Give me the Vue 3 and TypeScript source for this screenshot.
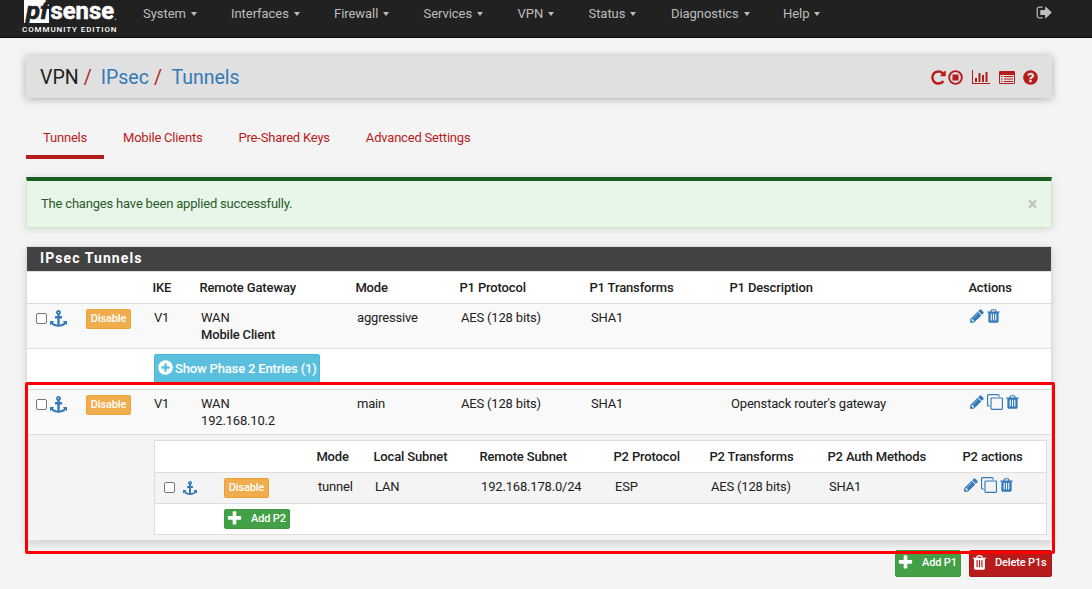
<script setup lang="ts">
import { h, type FunctionalComponent } from 'vue'

const circle =
  'm384 192q0 209-103 385.500t-279.500 279.500-385.500 103-385.500-103-279.500-279.500-103-385.500 103-385.500 279.500-279.500 385.500-103 385.500 103 279.500 279.500 103 385.500z'

const paths: Record<string, string> = {
  pencil:
    'M491 1536l91-91-235-235-91 91v107h128v128h107zm523-928q0-22-22-22-10 0-17 7l-542 542q-7 7-7 17 0 22 22 22 10 0 17-7l542-542q7-7 7-17zm-54-192l416 416-832 832h-416v-416zm683 96q0 53-37 90l-166 166-416-416 166-165q36-38 90-38 53 0 91 38l235 234q37 39 37 91z',
  trash:
    'M704 1376v-704q0-14-9-23t-23-9h-64q-14 0-23 9t-9 23v704q0 14 9 23t23 9h64q14 0 23-9t9-23zm256 0v-704q0-14-9-23t-23-9h-64q-14 0-23 9t-9 23v704q0 14 9 23t23 9h64q14 0 23-9t9-23zm256 0v-704q0-14-9-23t-23-9h-64q-14 0-23 9t-9 23v704q0 14 9 23t23 9h64q14 0 23-9t9-23zm-544-992h448l-48-117q-7-9-17-11h-317q-10 2-17 11zm928 32v64q0 14-9 23t-23 9h-96v948q0 83-47 143.500t-113 60.500h-832q-66 0-113-58.500t-47-141.500v-952h-96q-14 0-23-9t-9-23v-64q0-14 9-23t23-9h309l70-167q15-37 54-63t79-26h320q40 0 79 26t54 63l70 167h309q14 0 23 9t9 23z',
  plus:
    'M1600 736v192q0 40-28 68t-68 28h-416v416q0 40-28 68t-68 28h-192q-40 0-68-28t-28-68v-416h-416q-40 0-68-28t-28-68v-192q0-40 28-68t68-28h416v-416q0-40 28-68t68-28h192q40 0 68 28t28 68v416h416q40 0 68 28t28 68z',
  plusCircle:
    'M1344 960v-128q0-26-19-45t-45-19h-256v-256q0-26-19-45t-45-19h-128q-26 0-45 19t-19 45v256h-256q-26 0-45 19t-19 45v128q0 26 19 45t45 19h256v256q0 26 19 45t45 19h128q26 0 45-19t19-45v-256h256q26 0 45-19t19-45zm320-64q0 209-103 385.500t-279.500 279.500-385.500 103-385.500-103-279.500-279.500-103-385.500 103-385.500 279.500-279.500 385.500-103 385.500 103 279.500 279.500 103 385.500z',
  anchor:
    'M960 256q0-26-19-45t-45-19-45 19-19 45 19 45 45 19 45-19 19-45zm832 928v352q0 22-20 30-8 2-12 2-13 0-23-9l-93-93q-119 143-318.500 226.500t-429.500 83.500-429.500-83.500-318.500-226.500l-93 93q-9 9-23 9-4 0-12-2-20-8-20-30v-352q0-14 9-23t23-9h352q22 0 30 20 8 19-7 35l-100 100q67 91 189.500 153.500t271.500 82.500v-647h-192q-26 0-45-19t-19-45v-128q0-26 19-45t45-19h192v-163q-58-34-93-92.500t-35-128.500q0-106 75-181t181-75 181 75 75 181q0 70-35 128.500t-93 92.500v163h192q26 0 45 19t19 45v128q0 26-19 45t-45 19h-192v647q149-20 271.500-82.500t189.500-153.500l-100-100q-15-16-7-35 8-20 30-20h352q14 0 23 9t9 23z',
  clone:
    'M1664 1632v-1088q0-13-9.500-22.500t-22.500-9.500h-1088q-13 0-22.500 9.500t-9.500 22.500v1088q0 13 9.500 22.500t22.500 9.500h1088q13 0 22.500-9.500t9.500-22.500zm128-1088v1088q0 66-47 113t-113 47h-1088q-66 0-113-47t-47-113v-1088q0-66 47-113t113-47h1088q66 0 113 47t47 113zm-384-384v160h-128v-160q0-13-9.500-22.500t-22.500-9.500h-1088q-13 0-22.500 9.500t-9.500 22.500v1088q0 13 9.500 22.500t22.500 9.500h160v128h-160q-66 0-113-47t-47-113v-1088q0-66 47-113t113-47h1088q66 0 113 47t47 113z',
  repeat:
    'M1664 256v448q0 26-19 45t-45 19h-448q-42 0-59-40-17-39 14-69l138-138q-148-137-349-137-104 0-198.500 40.500t-163.500 109.500-109.500 163.500-40.500 198.500 40.500 198.500 109.500 163.500 163.500 109.500 198.500 40.500q119 0 225-52t179-147q7-10 23-12 15 0 25 9l137 138q9 8 9.500 20.500t-7.500 22.500q-109 132-264 204.500t-327 72.500q-156 0-298-61t-245-164-164-245-61-298 61-298 164-245 245-164 298-61q147 0 284.500 55.500t244.500 156.500l130-129q29-31 70-14 39 17 39 59z',
  question:
    'M1024 1376v-192q0-14-9-23t-23-9h-192q-14 0-23 9t-9 23v192q0 14 9 23t23 9h192q14 0 23-9t9-23zm256-672q0-88-55.500-163t-138.500-116-170-41q-243 0-371 213-15 24 8 42l132 100q7 6 19 6 16 0 25-12 53-68 86-92 34-24 86-24 48 0 85.500 26t37.500 59q0 38-20 61t-68 45q-63 28-115.500 86.500t-52.500 125.500v36q0 14 9 23t23 9h192q14 0 23-9t9-23q0-19 21.500-49.500t54.500-49.500q32-18 49-28.500t46-35 44.500-48 28-60.500 12.500-81z' + circle,
  signOut:
    'M704 1440q0 4 1 20t.5 26.500-3 23.500-10 19.500-20.500 6.500h-320q-119 0-203.500-84.500t-84.500-203.500v-704q0-119 84.500-203.500t203.500-84.500h320q13 0 22.500 9.500t9.500 22.500q0 4 1 20t.5 26.500-3 23.500-10 19.500-20.500 6.500h-320q-66 0-113 47t-47 113v704q0 66 47 113t113 47h312l11.500 1 11.500 3 8 5.500 7 9 2 13.500zm928-544q0 26-19 45l-544 544q-19 19-45 19t-45-19-19-45v-288h-448q-26 0-45-19t-19-45v-384q0-26 19-45t45-19h448v-288q0-26 19-45t45-19 45 19l544 544q19 19 19 45z',
  stop:
    'M576 576h640v640h-640zM896 128a768 768 0 1 0 0 1536a768 768 0 1 0 0-1536zm0 200a568 568 0 1 1 0 1136a568 568 0 1 1 0-1136z'
}

const Icon: FunctionalComponent<{ name: string }> = (props) =>
  h('svg', { viewBox: '0 0 1792 1792', fill: 'currentColor', 'fill-rule': 'evenodd' }, [
    h('path', { d: paths[props.name] })
  ])
Icon.props = ['name']

const menu = ['System', 'Interfaces', 'Firewall', 'Services', 'VPN', 'Status', 'Diagnostics', 'Help']
const tabs = ['Tunnels', 'Mobile Clients', 'Pre-Shared Keys', 'Advanced Settings']
const p1Head = ['', '', 'IKE', 'Remote Gateway', 'Mode', 'P1 Protocol', 'P1 Transforms', 'P1 Description', 'Actions']
const p2Head = ['', '', '', 'Mode', 'Local Subnet', 'Remote Subnet', 'P2 Protocol', 'P2 Transforms', 'P2 Auth Methods', 'P2 actions']

interface Phase1 {
  gateway: string
  mobile: boolean
  mode: string
  description: string
  actions: string[]
}
const phase1: Phase1[] = [
  { gateway: 'Mobile Client', mobile: true, mode: 'aggressive', description: '', actions: ['pencil', 'trash'] },
  { gateway: '192.168.10.2', mobile: false, mode: 'main', description: "Openstack router's gateway", actions: ['pencil', 'clone', 'trash'] }
]
const phase2 = ['tunnel', 'LAN', '192.168.178.0/24', 'ESP', 'AES (128 bits)', 'SHA1']
</script>

<template>
  <div class="page">
    <header class="navbar">
      <svg class="logo" width="98" height="36" viewBox="0 0 98 36">
        <path d="M3 0H24L28 3V23H3Z" fill="#fff" />
        <text class="logo-pf" x="5" y="18.500" textLength="23" lengthAdjust="spacingAndGlyphs">pf</text>
        <text class="logo-sense" x="29.500" y="19" textLength="63.500" lengthAdjust="spacingAndGlyphs">sense</text>
        <circle cx="94.500" cy="19.500" r=".7" fill="#bbb" />
        <text class="logo-ce" x="1" y="32" textLength="94.500">COMMUNITY EDITION</text>
      </svg>
      <nav class="menu">
        <a v-for="item in menu" :key="item">{{ item }}<i class="caret"></i></a>
      </nav>
      <Icon class="logout" name="signOut" />
    </header>

    <div class="titlebar">
      <div class="crumbs">
        <span>VPN</span><em class="s1">/</em><a>IPsec</a><em class="s2">/</em><a>Tunnels</a>
      </div>
      <div class="tools">
        <Icon class="t-repeat" name="repeat" />
        <Icon class="t-stop" name="stop" />
        <svg class="t-chart" viewBox="0 0 18 14" fill="currentColor">
          <path d="M0 0h1v13h17v1H0zM3 8h2v4H3zM6.500 3h2v9h-2zM10 5h2v7h-2zM13.500 2h2v10h-2z" />
        </svg>
        <svg class="t-list" viewBox="0 0 16 13" fill="currentColor">
          <path fill-rule="evenodd" d="M1 0h14q1 0 1 1v11q0 1-1 1H1q-1 0-1-1V1q0-1 1-1zM1 4v8h14V4zM2 5h1.500v1H2zM5 5h9v1H5zM2 7.500h1.500v1H2zM5 7.500h9v1H5zM2 10h1.500v1H2zM5 10h9v1H5z" />
        </svg>
        <Icon class="t-help" name="question" />
      </div>
    </div>

    <ul class="tabs">
      <li v-for="(tab, i) in tabs" :key="tab" :class="{ active: i === 0 }">{{ tab }}</li>
    </ul>

    <div class="alert"><span>The changes have been applied successfully.</span><b>×</b></div>

    <section class="panel">
      <h2>IPsec Tunnels</h2>
      <div class="row p1 head"><span v-for="(t, i) in p1Head" :key="i">{{ t }}</span></div>
      <template v-for="row in phase1" :key="row.mode">
        <div class="row p1 body">
          <div class="pick"><input type="checkbox" /><Icon class="anchor" name="anchor" /></div>
          <div><button class="btn disable">Disable</button></div>
          <div>V1</div>
          <div>WAN<br /><b v-if="row.mobile">{{ row.gateway }}</b><template v-else>{{ row.gateway }}</template></div>
          <div>{{ row.mode }}</div>
          <div>AES (128 bits)</div>
          <div>SHA1</div>
          <div>{{ row.description }}</div>
          <div class="actions"><Icon v-for="a in row.actions" :key="a" :class="a" :name="a" /></div>
        </div>
        <div v-if="row.mobile" class="show-row">
          <button class="btn show"><Icon name="plusCircle" />Show Phase 2 Entries (1)</button>
        </div>
        <div v-else class="nested-row">
          <div class="nested">
            <div class="row p2 head"><span v-for="(t, i) in p2Head" :key="i">{{ t }}</span></div>
            <div class="row p2 body">
              <div><input type="checkbox" /></div>
              <div><Icon class="anchor" name="anchor" /></div>
              <div><button class="btn disable">Disable</button></div>
              <div v-for="v in phase2" :key="v">{{ v }}</div>
              <div class="actions"><Icon v-for="a in ['pencil', 'clone', 'trash']" :key="a" :class="a" :name="a" /></div>
            </div>
            <div class="add-row"><button class="btn add small"><Icon name="plus" />Add P2</button></div>
          </div>
        </div>
      </template>
    </section>

    <div class="footer">
      <button class="btn add"><Icon name="plus" />Add P1</button>
      <button class="btn delete"><Icon name="trash" />Delete P1s</button>
    </div>

    <div class="highlight"></div>
  </div>
</template>

<style>
body {
  background: #f4f4f4;
  overflow: hidden;
}
</style>

<style scoped>
* {
  box-sizing: border-box;
}
.page {
  position: relative;
  height: 589px;
  overflow: hidden;
  background: #f4f4f4;
  color: #212121;
  font: 13px/17px Roboto, sans-serif;
}
svg {
  display: block;
  flex: none;
}
.navbar {
  display: flex;
  height: 38px;
  padding-left: 21px;
  background: #212121;
  border-bottom: 1px solid #080808;
  color: #bdbdbd;
}
.logo {
  overflow: visible;
}
.logo-pf {
  font: italic 700 24px Roboto, sans-serif;
  fill: #212121;
  stroke: #212121;
  stroke-width: 0.6px;
}
.logo-sense {
  font: 700 23px Roboto, sans-serif;
  fill: #fff;
  stroke: #fff;
  stroke-width: 0.5px;
}
.logo-ce {
  font: 500 8px Roboto, sans-serif;
  fill: #fff;
}
.menu {
  display: grid;
  grid-template-columns: 88px 103px 89.500px 94px 71px 82.500px 112px 60px;
  margin-left: 24px;
  padding-top: 5px;
}
.menu a {
  display: flex;
  align-items: center;
  height: 17px;
  letter-spacing: -0.05px;
}
.caret {
  margin-left: 5px;
  border: 3.500px solid transparent;
  border-top: 4px solid #bdbdbd;
  border-bottom: 0;
}
.logout {
  width: 17px;
  height: 17px;
  margin: 4px 0 0 193px;
}
.titlebar {
  display: flex;
  justify-content: space-between;
  height: 42px;
  margin: 18px 40px 0 26px;
  padding: 0 13px 0 14px;
  background: #e0e0e0;
  border-radius: 2px;
  box-shadow: 0 1px 8px rgba(0, 0, 0, 0.3);
}
.crumbs {
  display: flex;
  align-items: center;
  font-size: 19.500px;
}
.crumbs a {
  color: #337ab7;
}
.crumbs em {
  font-style: normal;
  color: #b71c1c;
}
.s1 {
  margin: 0 9px 0 5px;
}
.s2 {
  margin: 0 9.500px 0 5px;
}
.tools {
  display: flex;
  align-items: center;
  color: #b71c1c;
}
.t-repeat,
.t-stop,
.t-help {
  width: 17px;
  height: 17px;
}
.t-stop {
  margin-left: 0;
}
.t-chart {
  width: 18px;
  height: 14px;
  margin-left: 8px;
}
.t-list {
  width: 16px;
  height: 13px;
  margin-left: 9px;
}
.t-help {
  margin-left: 7px;
}
.tabs {
  display: flex;
  gap: 2px;
  margin: 23px 0 0 26px;
  padding: 0;
  list-style: none;
}
.tabs li {
  height: 38px;
  padding: 8px 17px 0;
  color: #b71c1c;
  letter-spacing: -0.2px;
}
.tabs .active {
  width: 78px;
  border-bottom: 4px solid #b71c1c;
}
.alert {
  display: flex;
  justify-content: space-between;
  height: 51px;
  margin: 18px 40px 0 26px;
  padding: 14px 14px 0;
  background: #e8f5e9;
  border: 1px solid #d0e9c6;
  border-top: 4px solid #1b5e20;
  color: #2a5a2a;
  letter-spacing: -0.19px;
  box-shadow: 0 1px 8px rgba(0, 0, 0, 0.12);
}
.alert b {
  font-size: 18px;
  color: #b9c4ba;
}
.panel {
  width: 1026px;
  margin: 18px 0 0 26px;
  border: 1px solid #ddd;
  background: #fff;
  letter-spacing: -0.18px;
  box-shadow: 0 3px 8px rgba(0, 0, 0, 0.15);
}
.panel h2 {
  height: 24px;
  margin: 0;
  padding-left: 13px;
  background: #424242;
  color: #fff;
  font: 700 14px/23px Roboto, sans-serif;
  letter-spacing: 1.08px;
}
.row {
  display: grid;
  border-top: 1px solid #ddd;
}
.p1 {
  grid-template-columns: 53px 68px 47px 156px 104px 130px 140px 239px 1fr;
}
.p2 {
  grid-template-columns: 27px 36px 94px 57px 106px 134px 96px 118px 135px 1fr;
}
.head {
  height: 32px;
  font-weight: 500;
  letter-spacing: -0.14px;
}
.head span {
  padding: 7px 0 0 4.400px;
  white-space: nowrap;
}
.body > div {
  padding: 5px 0 0 6px;
  white-space: nowrap;
}
.p1.body {
  height: 45px;
  background: #f9f9f9;
}
.body b {
  font-weight: 500;
}
input {
  display: block;
  flex: none;
  width: 11px;
  height: 11px;
  margin: 0;
  appearance: none;
  background: #fff;
  border: 1px solid #767676;
  border-radius: 2px;
}
.p1.body .pick {
  display: flex;
  padding: 6px 0 0 9px;
}
.pick input {
  margin-top: 3px;
}
.anchor {
  width: 17px;
  height: 17px;
  margin-left: 3px;
  color: #337ab7;
}
.btn {
  display: flex;
  align-items: center;
  margin: 0;
  padding: 0;
  border: 1px solid;
  border-radius: 2px;
  color: #fff;
  font: 500 11px Roboto, sans-serif;
  letter-spacing: -0.14px;
  white-space: nowrap;
}
.disable {
  justify-content: center;
  width: 45px;
  height: 20px;
  padding-bottom: 2px;
  background: #f0ad4e;
  border-color: #eea236;
}
.body > .actions {
  display: flex;
  padding: 4px 0 0 5px;
  color: #337ab7;
}
.actions svg {
  width: 16px;
  height: 16px;
}
.actions .trash {
  margin-left: 1px;
}
.actions .pencil + .trash {
  margin-left: 0;
}
.actions .trash {
  width: 17px;
}
.actions .clone {
  margin-left: 2px;
}
.show-row {
  height: 41px;
  padding: 5px 0 0 127px;
  border-top: 1px solid #ddd;
}
.show {
  width: 166px;
  height: 29px;
  padding-left: 2px;
  background: #5bc0de;
  border-color: #46b8da;
  font-size: 13px;
  letter-spacing: -0.16px;
}
.show svg {
  width: 17px;
  height: 17px;
  margin: -2px 1px 0 0;
}
.nested-row {
  height: 106px;
  padding: 5px 4px 0 127px;
  background: #f4f4f4;
  border-top: 1px solid #ddd;
}
.nested {
  height: 95px;
  background: #fff;
  border: 1px solid #ddd;
}
.nested .head {
  height: 31px;
  border: 0;
}
.p2.body {
  height: 31px;
  background: #f4f4f4;
}
.p2.body input {
  margin: 4px 0 0 3px;
}
.p2.body .anchor {
  width: 14px;
  height: 14px;
  margin: 3px 0 0 -5px;
}
.add-row {
  padding: 5px 0 0 69px;
  border-top: 1px solid #ddd;
}
.add {
  width: 66px;
  height: 27px;
  padding-left: 1px;
  background: #43a047;
  border-color: #3c9a40;
}
.add svg {
  width: 17px;
  height: 17px;
  margin-right: 8px;
}
.btn.small {
  height: 20px;
  padding-bottom: 2px;
}
.footer {
  display: flex;
  justify-content: flex-end;
  gap: 8px;
  margin: 9px 40px 0 0;
}
.delete {
  width: 83px;
  height: 27px;
  padding-left: 1px;
  background: #b71c1c;
  border-color: #a91818;
}
.delete svg {
  width: 17px;
  height: 17px;
  margin-right: 7px;
}
.footer .btn {
  padding-bottom: 3px;
}
.highlight {
  position: absolute;
  left: 25px;
  top: 382px;
  width: 1030px;
  height: 172px;
  border: 3px solid #f00;
  border-radius: 2px;
}
</style>
